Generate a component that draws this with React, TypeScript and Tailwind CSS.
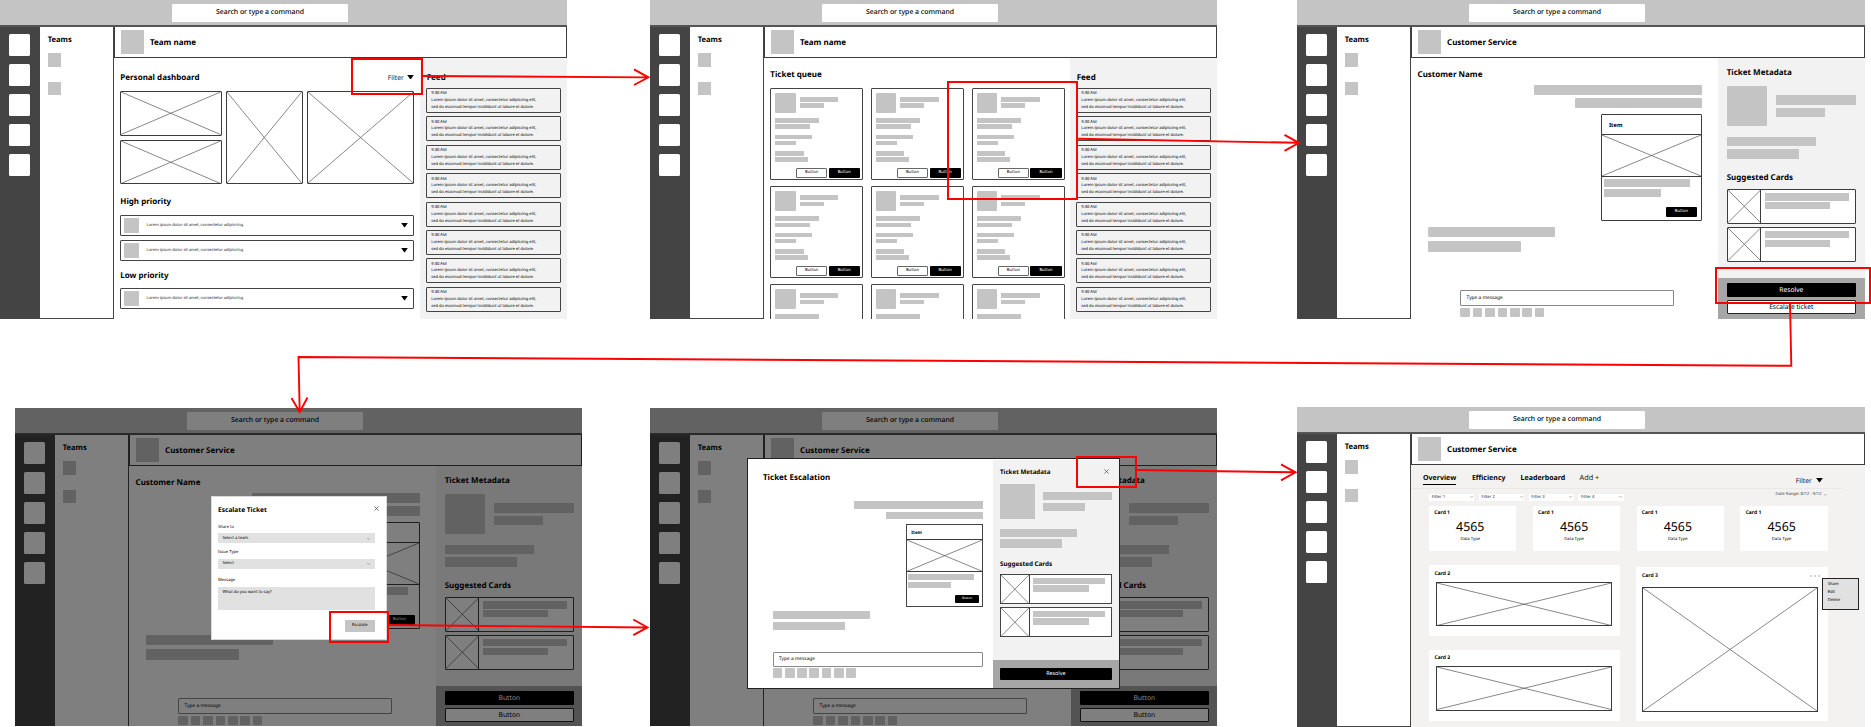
import React from "react";

type Kids = { children?: React.ReactNode };
type Cls = { className?: string };

const Bar = ({ className = "" }: Cls) => (
  <div className={`shrink-0 bg-[#c4c4c4] ${className}`} />
);

const Cross = ({ className = "" }: Cls) => (
  <div className={`shrink-0 border-[#3c3c3c] bg-white ${className}`}>
    <svg viewBox="0 0 100 100" preserveAspectRatio="none" className="block h-full w-full">
      <path
        d="M0 0L100 100M100 0L0 100"
        stroke="#555"
        strokeWidth="0.7"
        fill="none"
        vectorEffect="non-scaling-stroke"
      />
    </svg>
  </div>
);

const Caret = ({ className = "" }: Cls) => (
  <svg viewBox="0 0 7 4.4" className={`block h-[4.4px] w-[7px] shrink-0 ${className}`}>
    <path d="M0.2 0H6.8L4 3.9Q3.5 4.5 3 3.9Z" fill="#000" />
  </svg>
);

const Chevron = ({ className = "" }: Cls) => (
  <svg viewBox="0 0 4 3" className={`block h-[2px] w-[3px] shrink-0 ${className}`}>
    <path d="M0.5 0.5L2 2L3.5 0.5" stroke="#555" strokeWidth="0.8" fill="none" />
  </svg>
);

const Close = ({ className = "" }: Cls) => (
  <svg viewBox="0 0 5 5" className={`block h-[5px] w-[5px] ${className}`}>
    <path d="M0.4 0.4L4.6 4.6M4.6 0.4L0.4 4.6" stroke="#333" strokeWidth="0.6" />
  </svg>
);

const Heading = ({ children, className = "" }: Kids & Cls) => (
  <h2 className={`text-[8px] leading-[10px] font-bold whitespace-nowrap ${className}`}>{children}</h2>
);

function Frame({
  title,
  wide,
  dim,
  className = "",
  children,
}: Kids & Cls & { title: string; wide?: boolean; dim?: boolean }) {
  return (
    <section
      className={`relative flex shrink-0 flex-col overflow-hidden bg-white ${wide ? "w-[568px]" : "w-[567px]"} ${className}`}
    >
      <header className="flex h-[25px] shrink-0 items-start bg-[#c4c4c4] pt-[4px] pl-[172px]">
        <div className="flex h-[17.5px] w-[176px] items-center justify-center rounded-[1px] bg-white pt-[1.4px] text-[6.9px] font-medium">
          Search or type a command
        </div>
      </header>
      <div className="flex min-h-0 grow border-t-2 border-[#555]">
        <nav className="flex w-[40px] shrink-0 flex-col gap-[8.1px] bg-[#444] pt-[7px] pl-[8.7px]">
          {[0, 1, 2, 3, 4].map((i) => (
            <div key={i} className="h-[22px] w-[21.5px] shrink-0 rounded-[1.5px] bg-white" />
          ))}
        </nav>
        <aside
          className={`w-[74px] shrink-0 border-r border-[#444] pt-[8px] pl-[7.7px] ${dim ? "" : "border-b"}`}
        >
          <h2 className="text-[7.6px] leading-[10px] font-bold">Teams</h2>
          <Bar className="mt-[8.4px] h-[13.4px] w-[13.3px]" />
          <Bar className="mt-[14.8px] h-[13.4px] w-[13.3px]" />
        </aside>
        <div className="flex min-w-0 grow flex-col">
          <div className="flex h-[31px] shrink-0 items-center border-r border-b border-l border-[#3c3c3c] pl-[5.5px]">
            <Bar className="h-[24px] w-[23.5px]" />
            <Heading className="ml-[6px] pt-[2.4px]">{title}</Heading>
          </div>
          <div className="flex min-h-0 grow">{children}</div>
        </div>
      </div>
      {dim && <div className="absolute inset-0 bg-black/50" />}
    </section>
  );
}

const Feed = () => (
  <div className="flex w-[147px] shrink-0 flex-col gap-[3.4px] bg-[#f2f2f2] pt-[15px] pl-[6px]">
    <Heading className="mb-[1.6px] pl-[0.7px]">Feed</Heading>
    {Array.from({ length: 8 }, (_, i) => (
      <div
        key={i}
        className="h-[25px] w-[134.5px] shrink-0 rounded-[1px] border border-[#444] pt-[2.5px] pl-[4.3px] text-[4.04px] whitespace-nowrap"
      >
        <p className="leading-[5.5px]">9:30 AM</p>
        <p className="leading-[7.1px]">Lorem ipsum dolor sit amet, consectetur adipiscing elit,</p>
        <p className="leading-[7.1px]">sed do eiusmod tempor incididunt ut labore et dolore.</p>
      </div>
    ))}
  </div>
);

const PriorityRow = () => (
  <div className="flex h-[21px] w-[294px] items-center rounded-[1px] border border-[#444] pr-[5px] pl-[2.7px]">
    <Bar className="h-[15px] w-[15px]" />
    <p className="ml-[7.6px] grow text-[4px] whitespace-nowrap text-[#222]">
      Lorem ipsum dolor sit amet, consectetur adipiscing.
    </p>
    <Caret />
  </div>
);

const Dashboard = () => (
  <div className="w-[306px] shrink-0 pt-[15px] pl-[6.3px]">
    <div className="flex w-[294px] items-center">
      <Heading className="grow">Personal dashboard</Heading>
      <span className="-mt-[2px] mr-[3.5px] text-[6.8px] leading-[9px] text-[#222]">Filter</span>
      <Caret className="-mt-[1.5px]" />
    </div>
    <div className="mt-[8px] flex h-[93px] w-[294px] gap-[4.4px]">
      <div className="flex flex-col gap-[4px]">
        <Cross className="h-[44.5px] w-[101.5px] rounded-[1px] border" />
        <Cross className="h-[44.5px] w-[101.5px] rounded-[1px] border" />
      </div>
      <Cross className="h-[93px] w-[76.6px] rounded-[1px] border" />
      <Cross className="h-[93px] w-[107.2px] rounded-[1px] border" />
    </div>
    <Heading className="mt-[13px] mb-[8px]">High priority</Heading>
    <div className="flex flex-col gap-[4px]">
      <PriorityRow />
      <PriorityRow />
    </div>
    <Heading className="mt-[9.5px] mb-[7.5px]">Low priority</Heading>
    <PriorityRow />
  </div>
);

const TicketCard = () => (
  <div className="h-[92px] w-[92.5px] rounded-[1px] border border-[#444] pt-[4.3px] pr-[2px] pl-[4px]">
    <div className="flex gap-[4px]">
      <Bar className="h-[20px] w-[20.3px] rounded-[1px]" />
      <div className="flex flex-col gap-[1.7px] pt-[4px]">
        <Bar className="h-[4.5px] w-[38.7px]" />
        <Bar className="h-[4.5px] w-[24px]" />
      </div>
    </div>
    <div className="mt-[5px] flex flex-col gap-[1.7px]">
      <Bar className="h-[4.5px] w-[44px]" />
      <Bar className="h-[4.5px] w-[35px]" />
      <Bar className="mt-[4px] h-[4.5px] w-[37px]" />
      <Bar className="h-[4.5px] w-[21px]" />
      <Bar className="mt-[4px] h-[4.5px] w-[28.3px]" />
      <Bar className="h-[4.5px] w-[32.7px]" />
    </div>
    <div className="mt-[6.6px] flex justify-end gap-[1.4px] text-[4.1px] leading-[6px]">
      <div className="flex h-[9.5px] w-[31.2px] items-center justify-center rounded-[1px] border border-[#666] pt-[0.6px]">
        Button
      </div>
      <div className="flex h-[9.5px] w-[31.2px] items-center justify-center rounded-[1px] bg-black pt-[0.6px] text-white">
        Button
      </div>
    </div>
  </div>
);

const Queue = () => (
  <div className="w-[306px] shrink-0 overflow-hidden pt-[11.5px] pl-[6.3px]">
    <Heading>Ticket queue</Heading>
    <div className="mt-[8.5px] grid grid-cols-[92.5px_92.5px_92.5px] gap-x-[8.4px] gap-y-[6.1px]">
      {Array.from({ length: 9 }, (_, i) => (
        <TicketCard key={i} />
      ))}
    </div>
  </div>
);

const Composer = ({ className = "", squares = "" }: Cls & { squares?: string }) => (
  <div className={className}>
    <div className="flex h-[15.5px] items-center rounded-[1px] border border-[#888] pt-[0.6px] pl-[5.3px] text-[4.8px]">
      Type a message
    </div>
    <div className={`flex ${squares}`}>
      {Array.from({ length: 7 }, (_, i) => (
        <Bar key={i} className="h-[9.6px] w-[9.6px] rounded-[1px]" />
      ))}
    </div>
  </div>
);

const Conversation = () => (
  <div className="flex w-[306.7px] shrink-0 flex-col pt-[11.5px] pl-[6.5px]">
    <Heading>Customer Name</Heading>
    <div className="mt-[5.5px] flex flex-col items-end pr-[15.5px]">
      <Bar className="h-[10.3px] w-[168.3px] rounded-[1px]" />
      <Bar className="mt-[2.7px] h-[10.3px] w-[127px] rounded-[1px]" />
      <div className="mt-[5.7px] h-[107.5px] w-[101px] rounded-[1px] border border-[#3c3c3c]">
        <p className="h-[19px] pt-[5.8px] pl-[6.7px] text-[5.7px] leading-[9px] font-bold">Item</p>
        <Cross className="h-[43px] w-full border-y" />
        <Bar className="mt-[2.5px] ml-[2px] h-[8px] w-[85.7px]" />
        <Bar className="mt-[2px] ml-[2px] h-[7.8px] w-[56.5px]" />
        <div className="mt-[10px] ml-[63.5px] flex h-[9.5px] w-[31.5px] items-center justify-center rounded-[1px] bg-black text-[4.1px] text-white">
          Button
        </div>
      </div>
    </div>
    <Bar className="mt-[5.5px] ml-[10px] h-[10.3px] w-[127px] rounded-[1px]" />
    <Bar className="mt-[4px] ml-[10px] h-[10.3px] w-[93.5px] rounded-[1px]" />
    <Composer className="mt-[38.6px] ml-[42.8px] w-[213.5px]" squares="mt-[2px] gap-[2.83px]" />
  </div>
);

const SuggestedCard = () => (
  <div className="flex h-[34.6px] w-[129.3px] rounded-[1px] border border-[#3c3c3c] bg-white">
    <Cross className="w-[33.6px] border-r" />
    <div className="flex flex-col gap-[1.5px] pt-[3.2px] pl-[4px]">
      <Bar className="h-[7.1px] w-[83.5px]" />
      <Bar className="h-[7.1px] w-[64.5px]" />
    </div>
  </div>
);

const Metadata = ({ primary, secondary }: { primary: string; secondary: string }) => (
  <div className="flex grow flex-col bg-[#f2f2f2]">
    <div className="h-[220.3px] shrink-0 pt-[9.8px] pl-[9px]">
      <Heading>Ticket Metadata</Heading>
      <div className="mt-[8.2px] flex gap-[8.8px]">
        <Bar className="h-[40.5px] w-[40.7px] rounded-[1px]" />
        <div className="flex flex-col gap-[3.2px] pt-[9.3px]">
          <Bar className="h-[9.4px] w-[79.7px]" />
          <Bar className="h-[9.4px] w-[49px]" />
        </div>
      </div>
      <Bar className="mt-[10.5px] h-[9.4px] w-[89.3px]" />
      <Bar className="mt-[2.8px] h-[9.4px] w-[72px]" />
      <Heading className="mt-[14.8px]">Suggested Cards</Heading>
      <div className="mt-[5.9px] flex flex-col gap-[3.1px]">
        <SuggestedCard />
        <SuggestedCard />
      </div>
    </div>
    <div className="flex h-[41px] shrink-0 flex-col gap-[2.6px] bg-[#a6a6a6] pt-[4.7px] pl-[9px] text-[6.7px]">
      <div className="flex h-[14px] w-[129.3px] shrink-0 items-center justify-center rounded-[1px] bg-black text-white">
        {primary}
      </div>
      <div className="flex h-[14px] w-[129.3px] shrink-0 items-center justify-center rounded-[1px] border border-[#222] bg-white">
        {secondary}
      </div>
    </div>
  </div>
);

const SelectBox = ({ children }: Kids) => (
  <div className="flex h-[10px] items-center justify-between bg-[#e1e1e1] pt-[0.6px] pr-[5px] pl-[4.5px] text-[4.1px]">
    {children}
    <Chevron />
  </div>
);

const EscalateDialog = () => (
  <div className="absolute top-[496px] left-[211px] h-[144px] w-[176px] border border-[#d8d8d8] bg-white pt-[7.7px] pr-[11.3px] pl-[6px] text-[4.1px]">
    <div className="flex items-start justify-between">
      <h2 className="text-[6.6px] leading-[10px] font-bold">Escalate Ticket</h2>
      <Close className="-mr-[4px] mt-[1px]" />
    </div>
    <p className="mt-[9.9px] mb-[2.9px] leading-[6px]">Share to</p>
    <SelectBox>Select a team</SelectBox>
    <p className="mt-[6.9px] mb-[2.6px] leading-[6px]">Issue Type</p>
    <SelectBox>Select</SelectBox>
    <p className="mt-[9.4px] mb-[3.1px] leading-[6px]">Message</p>
    <div className="h-[22.5px] bg-[#e1e1e1] pt-[2.3px] pl-[4.5px] leading-[6px]">What do you want to say?</div>
    <div className="mt-[10px] ml-auto flex h-[12px] w-[29.7px] items-center justify-center bg-[#c4c4c4]">
      Escalate
    </div>
  </div>
);

const SmallSuggested = () => (
  <div className="flex h-[30.5px] w-[112px] border border-[#444] bg-white">
    <Cross className="w-[28.8px] border-r" />
    <div className="flex flex-col gap-[1.3px] pt-[3px] pl-[3.5px]">
      <Bar className="h-[6.2px] w-[72px]" />
      <Bar className="h-[6.2px] w-[55.7px]" />
    </div>
  </div>
);

const EscalationDialog = () => (
  <div className="absolute top-[458px] left-[747px] flex h-[231px] w-[373px] border border-[#222] bg-white">
    <div className="flex w-[245px] shrink-0 flex-col pt-[13.8px] pl-[15px]">
      <Heading className="text-[7.9px]">Ticket Escalation</Heading>
      <div className="mt-[18.7px] flex flex-col items-end pr-[10px]">
        <Bar className="h-[7.8px] w-[129px]" />
        <Bar className="mt-[2.3px] h-[7.8px] w-[97.3px]" />
        <div className="mt-[4.6px] h-[82.7px] w-[77.3px] border border-[#444]">
          <p className="h-[14px] pt-[3.7px] pl-[4.5px] text-[4.5px] leading-[8px] font-bold">Item</p>
          <Cross className="h-[33.3px] w-full border-y" />
          <Bar className="mt-[2px] ml-[1.3px] h-[6px] w-[65.5px]" />
          <Bar className="mt-[1.5px] ml-[1.3px] h-[6px] w-[43.3px]" />
          <div className="mt-[7.2px] ml-[48.3px] flex h-[7.6px] w-[24px] items-center justify-center rounded-[1px] bg-black text-[3.2px] text-white">
            Button
          </div>
        </div>
      </div>
      <Bar className="mt-[4px] ml-[10px] h-[8px] w-[97.3px]" />
      <Bar className="mt-[3.4px] ml-[10px] h-[8px] w-[71.7px]" />
      <Composer className="mt-[21.8px] ml-[9.7px] w-[210.5px]" squares="mt-[1px] gap-[2.67px]" />
    </div>
    <div className="mt-[1px] flex grow flex-col bg-[#f2f2f2]">
      <div className="h-[200px] shrink-0 pt-[6.5px] pl-[7px]">
        <div className="flex items-center justify-between pr-[10.5px]">
          <h2 className="text-[6.2px] leading-[10px] font-bold">Ticket Metadata</h2>
          <Close />
        </div>
        <div className="mt-[7.5px] flex gap-[7.6px]">
          <Bar className="h-[35px] w-[35.3px]" />
          <div className="flex flex-col gap-[2.7px] pt-[8.2px]">
            <Bar className="h-[8.1px] w-[68.7px]" />
            <Bar className="h-[8.1px] w-[42px]" />
          </div>
        </div>
        <Bar className="mt-[10px] h-[8.2px] w-[77px]" />
        <Bar className="mt-[2.2px] h-[8.2px] w-[62.3px]" />
        <h2 className="mt-[11.4px] text-[6.3px] leading-[10px] font-bold">Suggested Cards</h2>
        <div className="mt-[5px] flex flex-col gap-[2.4px]">
          <SmallSuggested />
          <SmallSuggested />
        </div>
      </div>
      <div className="grow bg-[#a6a6a6] pt-[8px] pl-[7px]">
        <div className="flex h-[12px] w-[111.7px] items-center justify-center rounded-[1px] bg-black text-[5.3px] text-white">
          Resolve
        </div>
      </div>
    </div>
  </div>
);

const WideCard = () => (
  <div className="h-[71px] w-[191px] shrink-0 bg-white pt-[4.5px] pl-[5.5px]">
    <h3 className="text-[5px] leading-[8px] font-bold">Card 2</h3>
    <Cross className="mt-[4.2px] ml-[1.5px] h-[44.5px] w-[176.3px] border" />
  </div>
);

const Analytics = () => (
  <div className="min-w-0 grow bg-[#f3f2f1]">
    <div className="flex h-[24px] w-[432px] items-start border-b border-[#eae9e8] pt-[7.9px] pl-[12px] text-[7.05px] leading-[10px] font-bold">
      <span className="h-[12.1px] border-b border-black">Overview</span>
      <span className="ml-[15.7px]">Efficiency</span>
      <span className="ml-[15px]">Leaderboard</span>
      <span className="ml-[14.2px] text-[7.3px] font-normal text-[#222]">Add +</span>
      <span className="mt-[3px] ml-auto text-[6.8px] font-normal text-[#222]">Filter</span>
      <Caret className="mt-[5.4px] mr-[20.5px] ml-[3.6px]" />
    </div>
    <div className="flex h-[17px] items-start pt-[4.5px] pl-[18px] text-[4.2px] leading-[7.5px] text-[#222]">
      <div className="flex gap-[4.5px]">
        {[1, 2, 3, 4].map((n) => (
          <div key={n} className="flex h-[7.5px] w-[45.3px] items-center justify-between bg-white pr-[1.5px] pl-[2.7px]">
            Filter {n}
            <Chevron />
          </div>
        ))}
      </div>
      <div className="-mt-[2.5px] ml-auto flex items-center gap-[2px] pr-[38.5px] whitespace-nowrap text-[#444]">
        Date Range: 8/12 - 9/12
        <Chevron />
      </div>
    </div>
    <div className="flex gap-[16.4px] pl-[18px]">
      {[0, 1, 2, 3].map((i) => (
        <div key={i} className="h-[45px] w-[87.4px] shrink-0 bg-white pt-[3px] pl-[5.3px]">
          <h3 className="text-[5px] leading-[8px] font-bold">Card 1</h3>
          <div className="w-[72px] text-center">
            <p className="mt-[1.7px] text-[12.4px] leading-[15px]">4565</p>
            <p className="mt-[2.9px] text-[4.2px] leading-[6px]">Data Type</p>
          </div>
        </div>
      ))}
    </div>
    <div className="mt-[14px] flex gap-[16.4px] pl-[18px]">
      <div className="flex flex-col gap-[13.5px]">
        <WideCard />
        <WideCard />
      </div>
      <div className="mt-[1.7px] h-[154px] w-[191.4px] shrink-0 bg-white pt-[5.5px] pl-[5.7px]">
        <div className="flex items-center justify-between pr-[8px]">
          <h3 className="text-[5px] leading-[8px] font-bold">Card 3</h3>
          <svg viewBox="0 0 10 2" className="block h-[2px] w-[10px]">
            <circle cx="1" cy="1" r="0.8" fill="#999" />
            <circle cx="5" cy="1" r="0.8" fill="#999" />
            <circle cx="9" cy="1" r="0.8" fill="#999" />
          </svg>
        </div>
        <Cross className="mt-[6.8px] h-[125px] w-[176px] border" />
      </div>
    </div>
  </div>
);

const CardMenu = () => (
  <ul className="absolute top-[578px] left-[1822px] h-[32px] w-[37px] border border-[#222] bg-[#e1e1e1] pt-[2.3px] pl-[4.7px] text-[4.1px] leading-[7.7px]">
    <li>Share</li>
    <li>Edit</li>
    <li>Delete</li>
  </ul>
);

const Flow = () => (
  <>
    <div className="absolute top-[58px] left-[351px] h-[37px] w-[72px] border-2 border-[#f00]" />
    <div className="absolute top-[81px] left-[947px] h-[119px] w-[131px] border-2 border-[#f00]" />
    <div className="absolute top-[267px] left-[1715px] h-[37px] w-[156px] border-2 border-[#f00]" />
    <div className="absolute top-[611px] left-[329px] h-[32px] w-[60px] border-2 border-[#f00]" />
    <div className="absolute top-[456px] left-[1076px] h-[32px] w-[61px] border-2 border-[#f00]" />
    <svg
      viewBox="0 0 1871 727"
      className="absolute inset-0 h-[727px] w-[1871px]"
      fill="none"
      stroke="#f00"
      strokeWidth="1.9"
    >
      <path d="M422 76L648 77.4M634 69.3L648.4 77.3L634 85" />
      <path d="M1077 138.8L1298 142.8M1284.5 134.8L1299 142.8L1284.5 150.8" />
      <path d="M1790 303L1791.3 365.8L298.5 357L299.7 411.5M291.5 398L299.7 412L307.5 397.5" />
      <path d="M388 625L647 627.5M633.3 619.5L647.5 627.4L633.3 635.2" />
      <path d="M1136 470L1295 472.3M1281 464.3L1295.5 472.3L1281 480.3" />
    </svg>
  </>
);

export default function App() {
  return (
    <main className="relative h-[727px] w-[1871px] overflow-hidden bg-white font-['Noto_Sans','Open_Sans',sans-serif] text-black [text-rendering:geometricPrecision]">
      <div className="flex">
        <Frame title="Team name" className="h-[319px]">
          <Dashboard />
          <Feed />
        </Frame>
        <Frame title="Team name" className="ml-[83px] h-[319px]">
          <Queue />
          <Feed />
        </Frame>
        <Frame title="Customer Service" wide className="ml-[80px] h-[319px]">
          <Conversation />
          <Metadata primary="Resolve" secondary="Escalate ticket" />
        </Frame>
      </div>
      <div className="mt-[88px] flex items-start pl-[15px]">
        <Frame title="Customer Service" dim className="mt-[1px] h-[318px]">
          <Conversation />
          <Metadata primary="Button" secondary="Button" />
        </Frame>
        <Frame title="Customer Service" dim className="mt-[1px] ml-[68px] h-[318px]">
          <Conversation />
          <Metadata primary="Button" secondary="Button" />
        </Frame>
        <Frame title="Customer Service" wide className="ml-[80px] h-[320px]">
          <Analytics />
        </Frame>
      </div>
      <EscalateDialog />
      <EscalationDialog />
      <CardMenu />
      <Flow />
    </main>
  );
}
